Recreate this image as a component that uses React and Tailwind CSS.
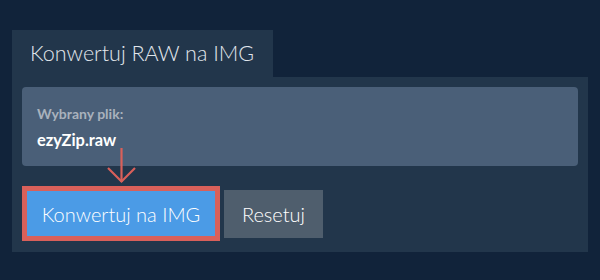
export default function App() {
  return (
    <div className="min-h-[280px] w-[600px] bg-[#11233a] pt-[30px] px-3 font-['Lato',sans-serif]">
      {/* Tab header */}
      <div className="w-[261px] h-[47px] bg-[#22364b] pl-[18px] flex items-center text-[21.5px] font-light text-[#e1e6ec]">
        Konwertuj RAW na IMG
      </div>

      {/* Panel */}
      <div className="relative bg-[#22364b] px-[10px] pt-[10px] pb-[11px]">
        <div className="h-[79px] rounded-[4px] bg-[#4a5f78] pl-[15px] pt-[18px]">
          <div className="text-[14px] leading-[17px] font-bold text-[#a9b2bd]">Wybrany plik:</div>
          <div className="mt-[8px] text-[16.4px] leading-[19px] font-bold text-white">ezyZip.raw</div>
        </div>

        <div className="mt-[20px] flex items-center gap-[4px]">
          <button className="w-[198px] h-[55px] border-[5px] border-[#d9605a] bg-[#4b9be6] text-white text-[20px] font-light">
            Konwertuj na IMG
          </button>
          <button className="w-[99px] h-[48px] bg-[#4f5e6d] text-white text-[20px] font-light">
            Resetuj
          </button>
        </div>

        {/* Arrow pointing at the convert button */}
        <svg className="absolute left-[95px] top-[70px]" width="30" height="38" viewBox="0 0 30 38" fill="none">
          <path d="M14.5 1 V35" stroke="#d9605a" strokeWidth="2.2" />
          <path d="M1 21 L14.5 34.5 L28 21" stroke="#d9605a" strokeWidth="2.2" />
        </svg>
      </div>
    </div>
  );
}
